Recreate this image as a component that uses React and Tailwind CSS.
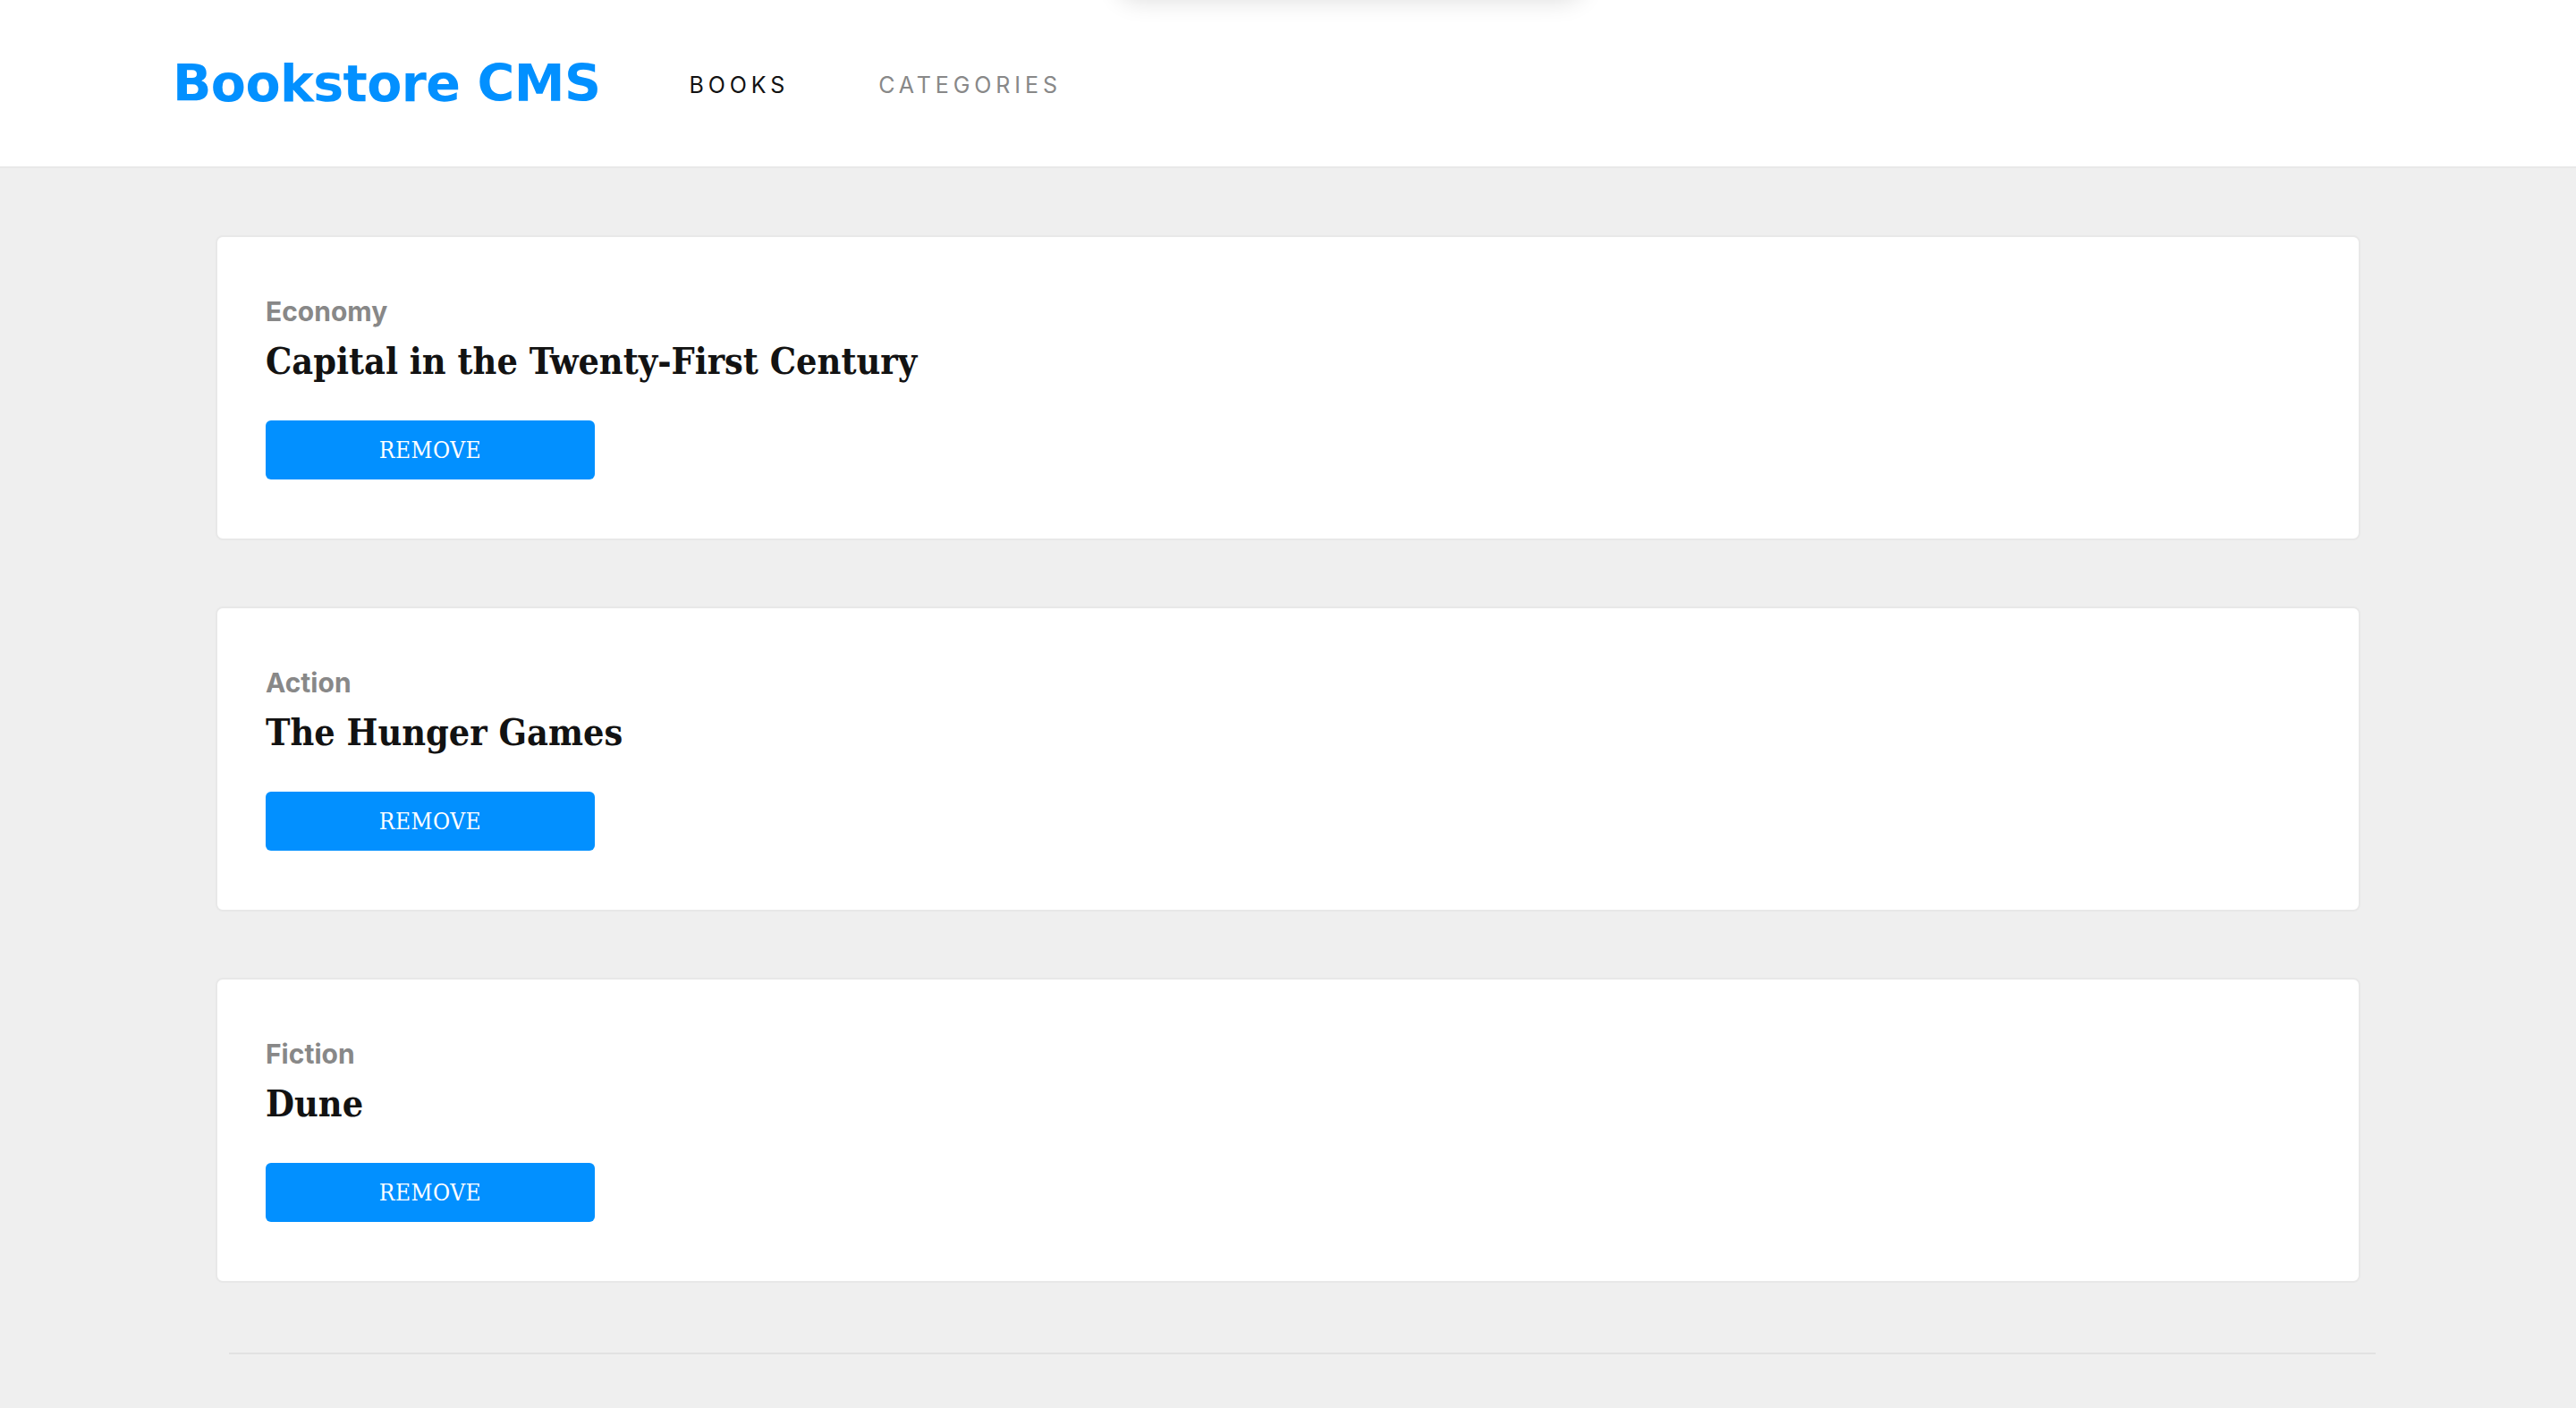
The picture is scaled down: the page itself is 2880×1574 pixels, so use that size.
import React from "react";

// Libros de ejemplo
const books = [
  { id: 1, category: "Economy", title: "Capital in the Twenty-First Century" },
  { id: 2, category: "Action", title: "The Hunger Games" },
  { id: 3, category: "Fiction", title: "Dune" },
];

const sans = "font-['Inter','Open_Sans',sans-serif]";
const wide = "font-['DejaVu_Sans','Inter',sans-serif]";
const slab = "font-['DejaVu_Serif','Liberation_Serif',serif]";

const Header = () => (
  <header className="relative h-[188px] bg-white border-b-2 border-[#e8e8e8] flex items-center pl-[193px]">
    {/* sombra de algo fuera de la vista */}
    <div className="absolute left-[1250px] top-[-44px] w-[520px] h-[44px] rounded-full bg-white shadow-[0_0_28px_rgba(0,0,0,0.14)]" />
    <h1 className={`${wide} text-[57px] font-bold text-[#0290ff] leading-none tracking-[-0.6px]`}>
      Bookstore CMS
    </h1>
    <nav className={`${sans} flex items-center gap-[100px] ml-[99px] mt-[4px] text-[25px] tracking-[4.9px] leading-none`}>
      <span className="text-[#121212]">BOOKS</span>
      <span className="text-[#888888]">CATEGORIES</span>
    </nav>
  </header>
);

const BookCard = ({ book }) => (
  <div className="bg-white border-2 border-[#e8e8e8] rounded-lg pl-[54px] pt-[68px] pb-[66px] flex flex-col items-start">
    <span className={`${sans} text-[30px] leading-[30px] font-bold text-[#888888]`}>
      {book.category}
    </span>
    <h2 className={`${slab} font-stretch-condensed text-[41px] leading-[41px] font-bold text-[#121212] mt-[21px]`}>
      {book.title}
    </h2>
    <button className={`${slab} font-stretch-condensed mt-[45px] w-[368px] h-[66px] rounded-md bg-[#0290ff] text-white text-[26px] font-light tracking-[0.5px]`}>
      REMOVE
    </button>
  </div>
);

export default function App() {
  return (
    <div className="min-h-screen bg-[#efefef] overflow-hidden">
      <Header />
      <main className="w-[2398px] ml-[241px] pt-[75px] flex flex-col gap-[74px]">
        {books.map((book) => (
          <BookCard key={book.id} book={book} />
        ))}
      </main>
      <div className="ml-[256px] w-[2400px] h-[2px] bg-[#e2e2e2] mt-[78px]" />
    </div>
  );
}
